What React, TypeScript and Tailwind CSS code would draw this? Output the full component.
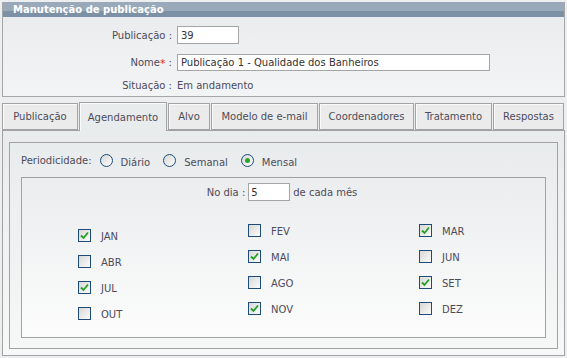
import React from "react";

const FONT = "font-['DejaVu_Sans',Verdana,sans-serif]";

const tabs = [
  { label: "Publicação", w: "w-[76px]" },
  { label: "Agendamento", w: "w-[88px]", active: true },
  { label: "Alvo", w: "w-[42px]" },
  { label: "Modelo de e-mail", w: "w-[107px]" },
  { label: "Coordenadores", w: "w-[95px]" },
  { label: "Tratamento", w: "w-[77px]" },
  { label: "Respostas", w: "w-[71px]" },
];

const months = [
  [
    { m: "JAN", on: true },
    { m: "ABR", on: false },
    { m: "JUL", on: true },
    { m: "OUT", on: false },
  ],
  [
    { m: "FEV", on: false },
    { m: "MAI", on: true },
    { m: "AGO", on: false },
    { m: "NOV", on: true },
  ],
  [
    { m: "MAR", on: true },
    { m: "JUN", on: false },
    { m: "SET", on: true },
    { m: "DEZ", on: false },
  ],
];

const Check = ({ on }: { on: boolean }) => (
  <span className="w-[13px] h-[13px] border border-[#1d4b7a] bg-gradient-to-br from-[#d8d8d6] to-[#fbfbfb] flex items-center justify-center shrink-0">
    {on && (
      <svg width="9" height="9" viewBox="0 0 9 9">
        <path d="M1 4.5 L3.5 7 L8 1.5" fill="none" stroke="#23a023" strokeWidth="1.8" />
      </svg>
    )}
  </span>
);

const Radio = ({ on }: { on?: boolean }) => (
  <span className="w-[13px] h-[13px] rounded-full border border-[#1d4b7a] bg-gradient-to-br from-[#d6d6d4] to-[#ffffff] flex items-center justify-center shrink-0">
    {on && <span className="w-[5px] h-[5px] rounded-full bg-[#2aa52a]" />}
  </span>
);

export default function App() {
  return (
    <div className={`w-[567px] h-[358px] bg-[#eceeef] text-[10px] text-[#4d4b5a] ${FONT} overflow-hidden`}>
      {/* top panel */}
      <div className="ml-[2px] mr-[2px] pt-[2px]">
        <div className="border border-[#a4a6a8] border-t-0 bg-gradient-to-b from-[#e8ebec] to-[#f3f4f5] h-[95px]">
          <div className="h-[15px] bg-gradient-to-b from-[#9aa9b9] from-60% to-[#7d91a6] to-60% flex items-center pl-[10px] text-white font-bold text-[10px]">
            Manutenção de publicação
          </div>
          <div className="flex flex-col pt-[9px]">
            <div className="flex items-center h-[18px]">
              <span className="w-[169px] text-right">Publicação :</span>
              <span className="ml-[5px] w-[62px] h-[18px] border border-[#a5a5a5] bg-white flex items-center pl-[3px] text-[#333]">39</span>
            </div>
            <div className="flex items-center h-[17px] mt-[10px]">
              <span className="w-[169px] text-right">
                Nome<sup className="text-[#e2282c] text-[11px] relative top-[1px]">*</sup> :
              </span>
              <span className="ml-[5px] w-[313px] h-[17px] border border-[#a5a5a5] bg-white flex items-center pl-[3px] text-[#333]">
                Publicação 1 - Qualidade dos Banheiros
              </span>
            </div>
            <div className="flex items-center h-[14px] mt-[7px]">
              <span className="w-[169px] text-right">Situação :</span>
              <span className="ml-[5px]">Em andamento</span>
            </div>
          </div>
        </div>
      </div>

      {/* tabs */}
      <div className="mt-[5px] ml-[2px] flex items-end gap-[1px] h-[28px] relative z-10">
        {tabs.map((t) => (
          <div
            key={t.label}
            className={`${t.w} flex items-center justify-center border border-[#a2a2a2] shadow-[inset_1px_1px_0_#fafafa] ${
              t.active ? "h-[29px] -mb-[1px] border-b-0 bg-[#e9eced]" : "h-[27px] bg-[#ebebeb]"
            }`}
          >
            {t.label}
          </div>
        ))}
      </div>

      {/* content */}
      <div className="ml-[2px] mr-[2px] h-[226px] border border-[#a2a2a2] bg-gradient-to-b from-[#e9eced] to-[#f7f8f8] p-[6px] pt-[11px]">
        <div className="h-[207px] border border-[#a2a2a2] bg-gradient-to-b from-[#e9eced] to-[#f6f7f7] px-[11px]">
          <div className="flex items-center h-[34px]">
            <span>Periodicidade:</span>
            <span className="ml-[8px] flex items-center gap-[8px]">
              <Radio />
              <span className="mt-[4px]">Diário</span>
            </span>
            <span className="ml-[13px] flex items-center gap-[8px]">
              <Radio />
              <span className="mt-[4px]">Semanal</span>
            </span>
            <span className="ml-[13px] flex items-center gap-[8px]">
              <Radio on />
              <span className="mt-[4px]">Mensal</span>
            </span>
          </div>
          <div className="h-[161px] border border-[#a2a2a2] bg-gradient-to-b from-[#ebedee] to-[#fcfcfc]">
            <div className="flex items-center justify-center h-[18px] mt-[5px] pr-[3px]">
              <span>No dia :</span>
              <span className="ml-[3px] w-[42px] h-[18px] border border-[#a5a5a5] bg-white flex items-center pl-[2px] text-[#333]">5</span>
              <span className="ml-[3px]">de cada mês</span>
            </div>
            <div className="grid grid-cols-[170px_171px_1fr] pl-[56px] mt-[23px]">
              {months.map((col, ci) => (
                <div key={ci} className={`flex flex-col gap-[13px] ${ci === 0 ? "pt-[5px]" : ""}`}>
                  {col.map((c) => (
                    <div key={c.m} className="flex items-center gap-[10px] h-[13px]">
                      <Check on={c.on} />
                      <span className="mt-[2px]">{c.m}</span>
                    </div>
                  ))}
                </div>
              ))}
            </div>
          </div>
        </div>
      </div>
    </div>
  );
}
